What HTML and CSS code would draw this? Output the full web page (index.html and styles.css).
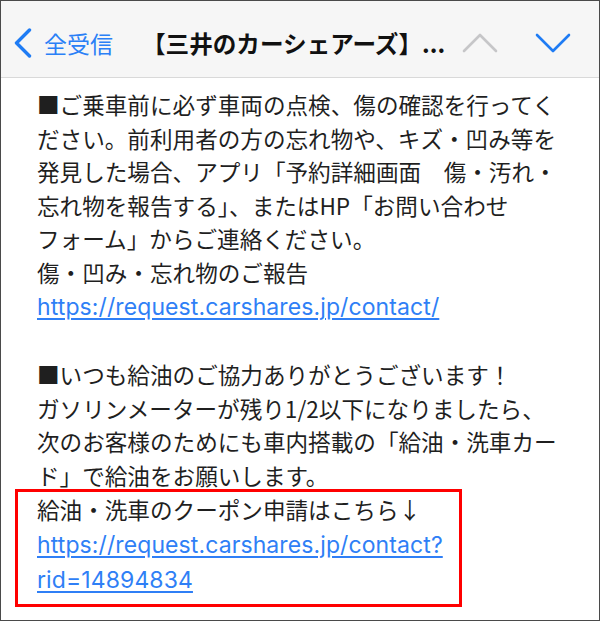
FILE: index.html
```html
<!DOCTYPE html>
<html lang="ja">
<head>
<meta charset="utf-8">
<link rel="stylesheet" href="styles.css">
</head>
<body>
<div class="frame">
  <header class="bar">
    <div class="back">
      <svg class="back-icon" width="20" height="30" viewBox="0 0 20 30"><path d="M16.5 2 L3.5 15 L16.5 28" fill="none" stroke="#1f7cf4" stroke-width="3.4" stroke-linecap="round" stroke-linejoin="round"/></svg>
      <span class="back-label">全受信</span>
    </div>
    <div class="title">【三井のカーシェアーズ】...</div>
    <svg class="nav-up" width="36" height="22" viewBox="0 0 36 22"><path d="M2 19 L18 3 L34 19" fill="none" stroke="#c6c6c8" stroke-width="2.6" stroke-linecap="round" stroke-linejoin="round"/></svg>
    <svg class="nav-down" width="36" height="22" viewBox="0 0 36 22"><path d="M2 3 L18 19 L34 3" fill="none" stroke="#1f7cf4" stroke-width="2.6" stroke-linecap="round" stroke-linejoin="round"/></svg>
  </header>
  <main class="mail">
    <p class="para">■ご乗車前に必ず車両の点検、傷の確認を行ってく<br>ださい。前利用者の方の忘れ物や、キズ・凹み等を<br>発見した場合、アプリ「予約詳細画面　傷・汚れ・<br>忘れ物を報告する」、またはHP「お問い合わせ<br>フォーム」からご連絡ください。<br>傷・凹み・忘れ物のご報告<br><a class="link" href="#">https://request.carshares.jp/contact/</a></p>
    <p class="para gap">■いつも給油のご協力ありがとうございます！<br>ガソリンメーターが残り1/2以下になりましたら、<br>次のお客様のためにも車内搭載の「給油・洗車カー<br>ド」で給油をお願いします。</p>
    <div class="highlight">
      <p class="para">給油・洗車のクーポン申請はこちら↓<br><a class="link" href="#">https://request.carshares.jp/contact?<br>rid=14894834</a></p>
    </div>
  </main>
</div>
</body>
</html>
```
FILE: styles.css
```css
* { box-sizing: border-box; }
html, body { margin: 0; padding: 0; background: #fff; }
body {
  font-family: "Noto Sans CJK JP", "Noto Sans", sans-serif;
  color: #1d1d1f;
}
.frame {
  width: 600px;
  height: 621px;
  border: 1px solid #4a4a4a;
  overflow: hidden;
  background: #fff;
}
.bar {
  height: 77px;
  background: #f6f6f6;
  border-bottom: 1px solid #d9d9d9;
  display: flex;
  align-items: center;
  padding: 8px 0 0 12px;
}
.back {
  display: flex;
  align-items: center;
}
.back-icon { display: block; margin-top: -1px; }
.back-label {
  margin-left: 11px;
  font-size: 23px;
  color: #2a80f6;
}
.title {
  margin-left: 29px;
  font-size: 23.6px;
  font-weight: 700;
  color: #111;
  white-space: nowrap;
}
.nav-up { display: block; margin-left: 17px; }
.nav-down { display: block; margin-left: 37px; }
.mail {
  padding: 10px 0 0 36px;
}
.para {
  margin: 0;
  font-family: "Noto Sans CJK JP", sans-serif;
  font-size: 22.6px;
  line-height: 33.5px;
  white-space: nowrap;
  color: #1f1f1f;
}
.para.gap { margin-top: 33.5px; }
.link {
  font-family: "Inter", "Noto Sans CJK JP", sans-serif;
  font-size: 23px;
  letter-spacing: 0.1px;
  color: #2f7ff6;
  text-decoration: underline;
  text-underline-offset: 3px;
  text-decoration-thickness: 1.5px;
}
.highlight {
  width: 447px;
  margin-left: -22px;
  border: 3px solid #ff0000;
  padding: 1px 0 6px 19px;
  margin-top: -3px;
}
```
